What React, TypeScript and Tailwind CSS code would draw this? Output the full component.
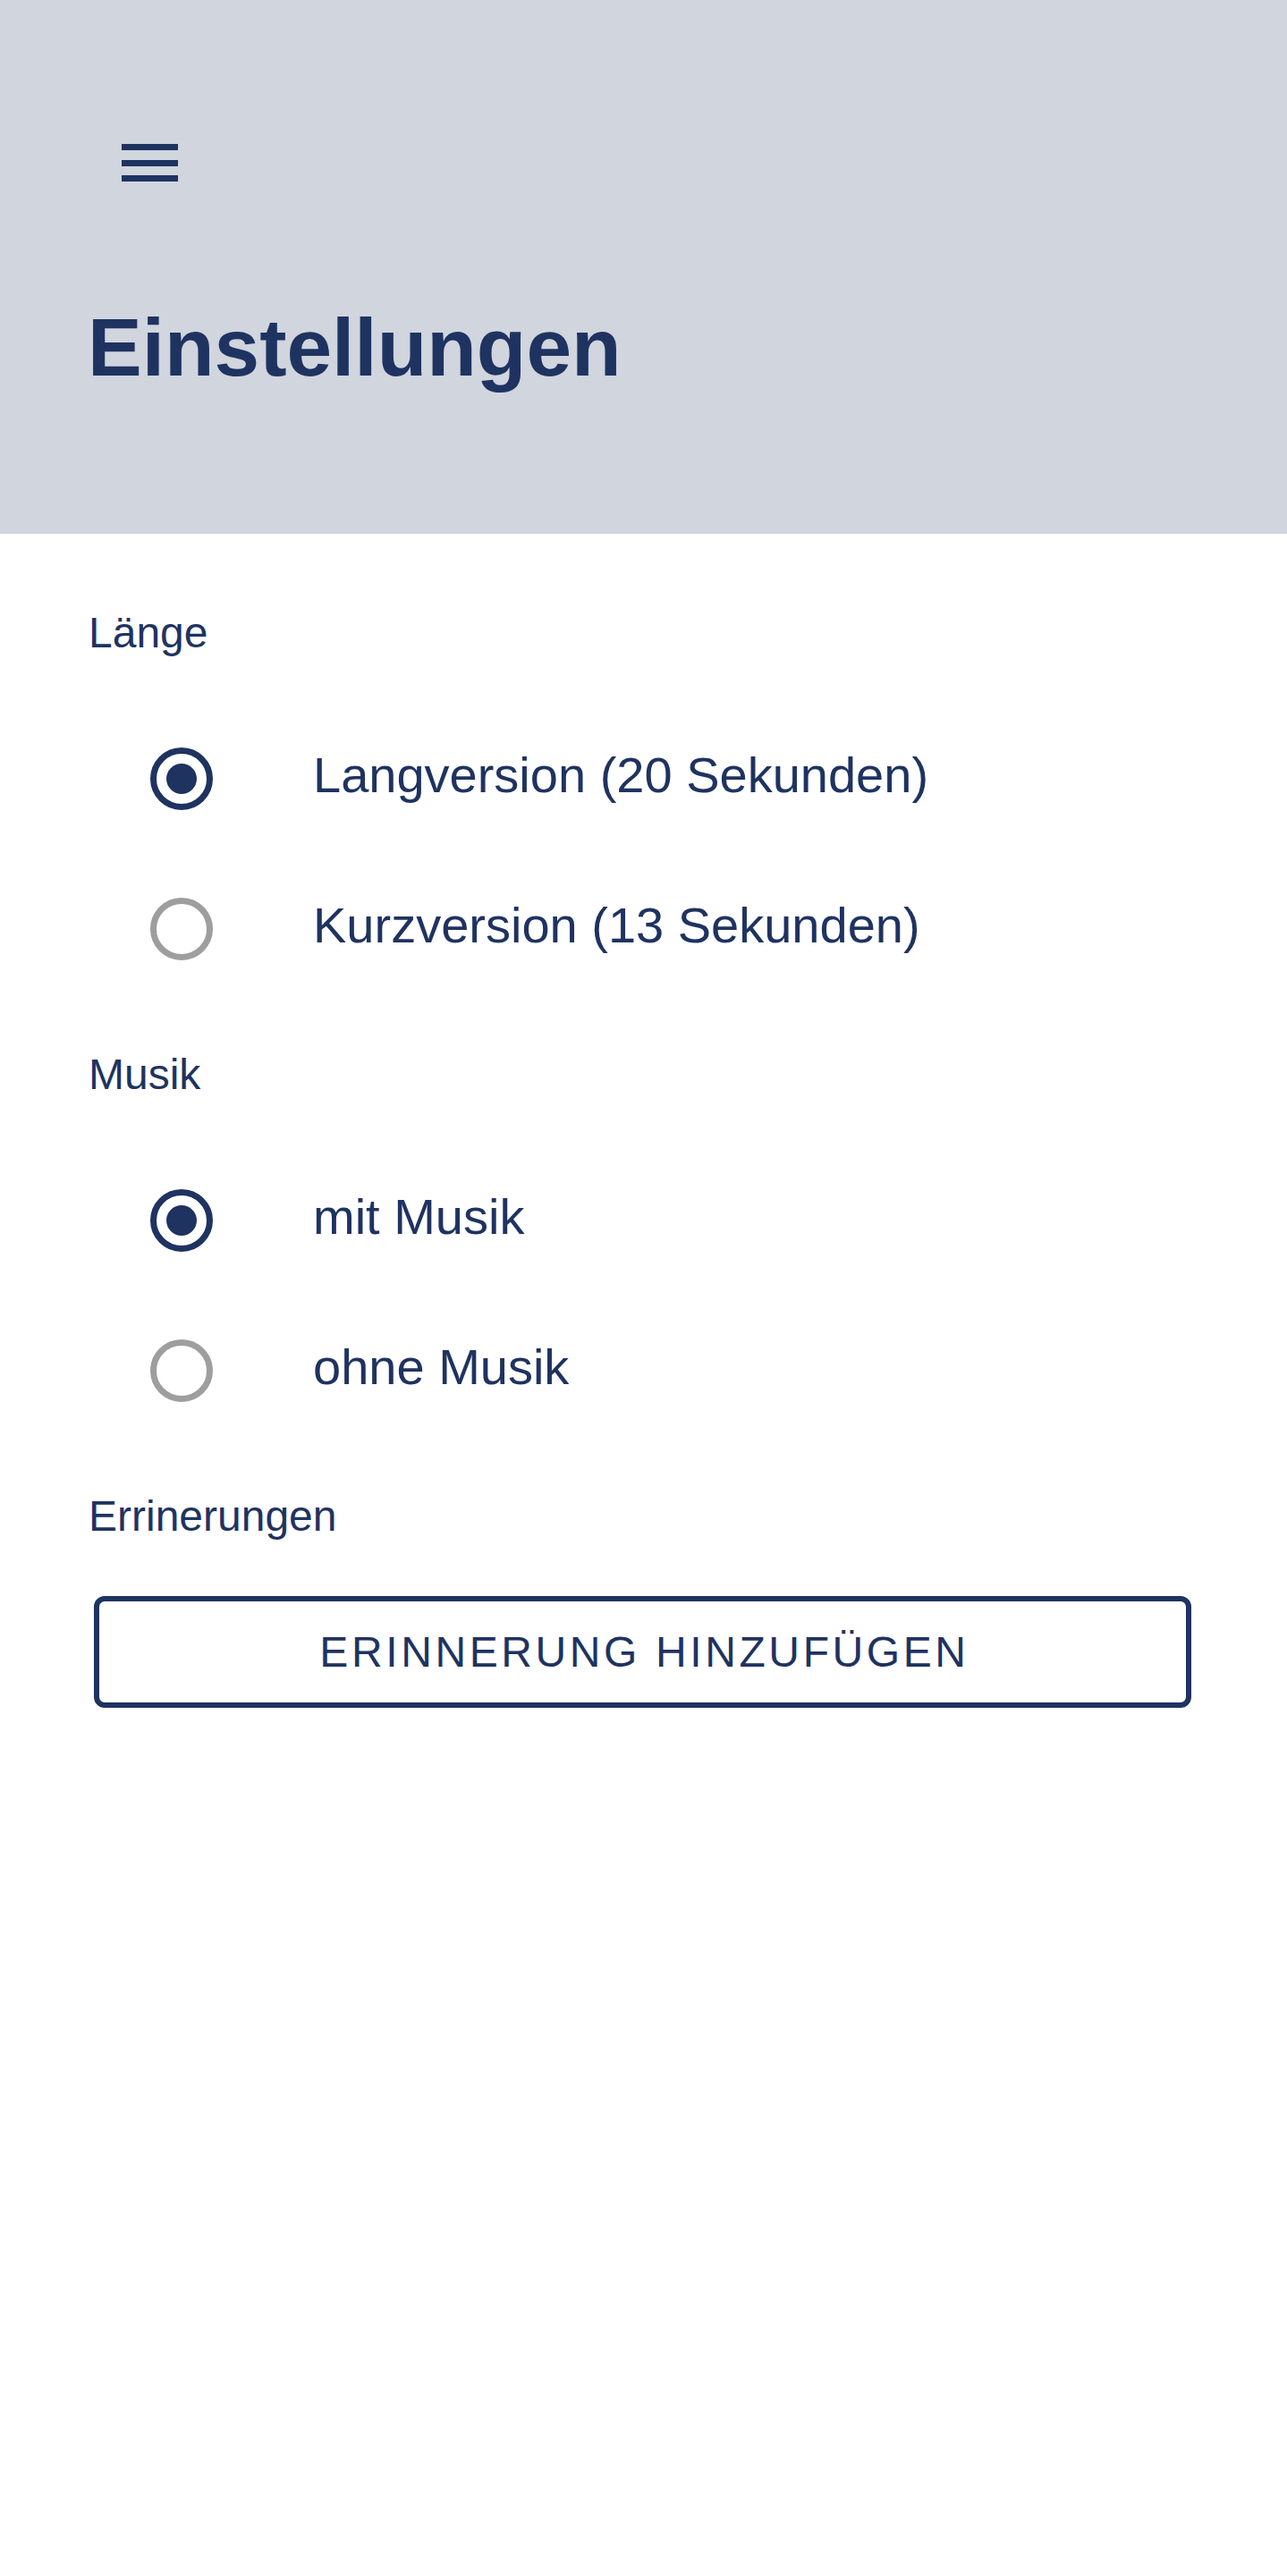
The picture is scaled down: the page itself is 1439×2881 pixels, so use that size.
import { useState } from "react";

const navy = "text-[#1f3361]";

interface RadioRowProps {
  label: string;
  checked: boolean;
  onSelect: () => void;
}

function RadioRow({ label, checked, onSelect }: RadioRowProps) {
  return (
    <button
      type="button"
      onClick={onSelect}
      className="flex h-[168px] w-full items-center text-left"
    >
      <span
        className={
          checked
            ? "ml-[69px] flex h-[70px] w-[70px] shrink-0 items-center justify-center rounded-full border-[7px] border-[#1f3361]"
            : "ml-[69px] flex h-[70px] w-[70px] shrink-0 items-center justify-center rounded-full border-[7px] border-[#9e9e9e]"
        }
      >
        {checked && <span className="h-[34px] w-[34px] rounded-full bg-[#1f3361]" />}
      </span>
      <span className={`mb-2 ml-[112px] text-[56px] leading-none ${navy}`}>{label}</span>
    </button>
  );
}

function SectionLabel({ children }: { children: string }) {
  return <p className={`text-[48px] leading-none ${navy}`}>{children}</p>;
}

export default function App() {
  const [length, setLength] = useState<"lang" | "kurz">("lang");
  const [music, setMusic] = useState<"mit" | "ohne">("mit");

  return (
    <div
      className="min-h-screen bg-white"
      style={{ fontFamily: '"Liberation Sans", Arial, sans-serif' }}
    >
      <header className="flex h-[597px] flex-col bg-[#d0d5de] pl-[98px]">
        <button type="button" className="ml-[38px] mt-[161px] h-[42px] w-[63px]" aria-label="Menü">
          <svg viewBox="0 0 63 42" className="h-[42px] w-[63px]" fill="#1f3361">
            <rect x="0" y="0" width="63" height="7" />
            <rect x="0" y="18" width="63" height="7" />
            <rect x="0" y="35" width="63" height="7" />
          </svg>
        </button>
        <h1 className={`mt-[140px] text-[91px] font-bold leading-none ${navy}`}>Einstellungen</h1>
      </header>

      <main className="flex flex-col px-[99px] pt-[87px]">
        <SectionLabel>Länge</SectionLabel>
        <div className="mt-[55px] -ml-[99px]">
          <div className="pl-[99px]">
            <RadioRow
              label="Langversion (20 Sekunden)"
              checked={length === "lang"}
              onSelect={() => setLength("lang")}
            />
            <RadioRow
              label="Kurzversion (13 Sekunden)"
              checked={length === "kurz"}
              onSelect={() => setLength("kurz")}
            />
          </div>
        </div>

        <div className="mt-[55px]">
          <SectionLabel>Musik</SectionLabel>
        </div>
        <div className="mt-[55px]">
          <RadioRow label="mit Musik" checked={music === "mit"} onSelect={() => setMusic("mit")} />
          <RadioRow label="ohne Musik" checked={music === "ohne"} onSelect={() => setMusic("ohne")} />
        </div>

        <div className="mt-[55px]">
          <SectionLabel>Errinerungen</SectionLabel>
        </div>
        <button
          type="button"
          className={`mt-[65px] ml-[6px] mr-[8px] flex h-[125px] items-center justify-center rounded-[12px] border-[6px] border-[#1f3361] bg-white pl-[4px] text-[48px] uppercase leading-none tracking-[3.6px] ${navy}`}
        >
          Erinnerung hinzufügen
        </button>
      </main>
    </div>
  );
}
